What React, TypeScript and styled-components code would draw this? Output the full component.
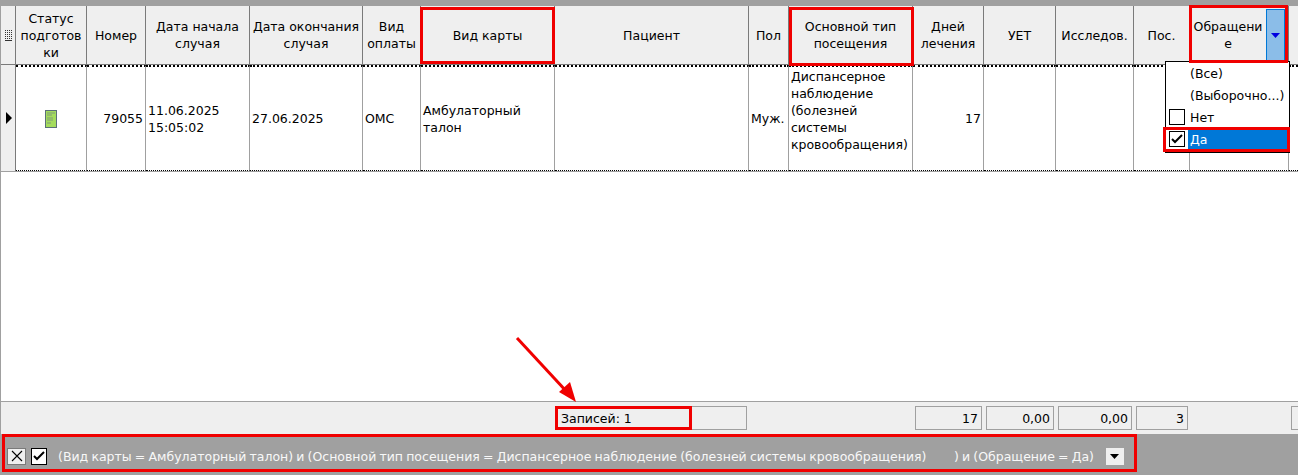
import React from 'react'
import styled, { createGlobalStyle } from 'styled-components'

const columns = '15px 71px 59px 104px 113px 58px 134px 194px 40px 124px 71px 72px 78px 56px 99px 1fr'

type Align = 'left' | 'right' | 'center'

export default function App() {
  return (
    <>
      <GlobalStyle />
      <Page>
        <TopStrip />
        <HeaderRow>
          <HeadCell>
            <GridGlyph />
          </HeadCell>
          <HeadCell>
            Статус
            <br />
            подготов
            <br />
            ки
          </HeadCell>
          <HeadCell>Номер</HeadCell>
          <HeadCell>
            Дата начала
            <br />
            случая
          </HeadCell>
          <HeadCell>
            Дата окончания
            <br />
            случая
          </HeadCell>
          <HeadCell>
            Вид
            <br />
            оплаты
          </HeadCell>
          <HeadCell>Вид карты</HeadCell>
          <HeadCell>Пациент</HeadCell>
          <HeadCell>Пол</HeadCell>
          <HeadCell>
            Основной тип
            <br />
            посещения
          </HeadCell>
          <HeadCell>
            Дней
            <br />
            лечения
          </HeadCell>
          <HeadCell>УЕТ</HeadCell>
          <HeadCell>Исследов.</HeadCell>
          <HeadCell>Пос.</HeadCell>
          <FilterHead>
            <FilterCaption>
              Обращени
              <br />е
            </FilterCaption>
            <FilterToggle>
              <svg width="9" height="5" viewBox="0 0 9 5">
                <path d="M0 0h9L4.5 5z" fill="#0000e0" />
              </svg>
            </FilterToggle>
          </FilterHead>
          <HeadCell $last />
        </HeaderRow>

        <DataRow>
          <RowMarker>
            <svg width="6" height="12" viewBox="0 0 6 12">
              <path d="M0 0l6 6-6 6z" fill="#000" />
            </svg>
          </RowMarker>
          <DataCell $align="center">
            <StatusIcon />
          </DataCell>
          <DataCell $align="right">79055</DataCell>
          <DataCell>
            <span>
              11.06.2025
              <br />
              15:05:02
            </span>
          </DataCell>
          <DataCell>27.06.2025</DataCell>
          <DataCell>ОМС</DataCell>
          <DataCell>
            <span>
              Амбулаторный
              <br />
              талон
            </span>
          </DataCell>
          <DataCell />
          <DataCell>Муж.</DataCell>
          <VisitCell>
            Диспансерное
            <br />
            наблюдение
            <br />
            (болезней
            <br />
            системы
            <br />
            кровообращения)
          </VisitCell>
          <DataCell $align="right">17</DataCell>
          <DataCell />
          <DataCell />
          <DataCell />
          <DataCell />
          <DataCell $last />
        </DataRow>

        <EmptyArea />

        <SummaryRow>
          <SummarySpacer $span={7} />
          <SummaryBox $left>Записей: 1</SummaryBox>
          <SummarySpacer $span={2} />
          <SummaryBox>17</SummaryBox>
          <SummaryBox>0,00</SummaryBox>
          <SummaryBox>0,00</SummaryBox>
          <SummaryBox>3</SummaryBox>
          <SummarySpacer $span={1} />
          <SummaryTail />
        </SummaryRow>

        <FilterBar>
          <BarButton>
            <svg width="12" height="12" viewBox="0 0 12 12">
              <path d="M1 1l10 10M11 1L1 11" stroke="#000" strokeWidth="1.1" />
            </svg>
          </BarButton>
          <BarCheck>
            <CheckMark />
          </BarCheck>
          <FilterText>
            (Вид карты = Амбулаторный талон) и (Основной тип посещения = Диспансерное наблюдение (болезней системы
            кровообращения)
          </FilterText>
          <FilterTextTail>) и (Обращение = Да)</FilterTextTail>
          <BarMenu>
            <svg width="9" height="5" viewBox="0 0 9 5">
              <path d="M0 0h9L4.5 5z" fill="#000" />
            </svg>
          </BarMenu>
        </FilterBar>

        <Dropdown>
          <DropItem>(Все)</DropItem>
          <DropItem>(Выборочно...)</DropItem>
          <DropItem>
            <ItemBox />
            Нет
          </DropItem>
          <DropItem>
            <ItemBox>
              <CheckMark />
            </ItemBox>
            <Selected>Да</Selected>
          </DropItem>
        </Dropdown>

        <RedFrame $x={420} $y={7} $w={135} $h={57} />
        <RedFrame $x={789} $y={7} $w={125} $h={59} />
        <RedFrame $x={1189} $y={5} $w={99} $h={58} />
        <RedFrame $x={1163} $y={127} $w={127} $h={25} />
        <RedFrame $x={555} $y={406} $w={137} $h={24} />
        <RedFrame $x={2} $y={434} $w={1135} $h={38} />

        <ArrowLayer width="80" height="80" viewBox="0 0 80 80">
          <path d="M2 2L52 56" stroke="#f00000" strokeWidth="3" fill="none" />
          <path d="M61 66L44 56L55 46z" fill="#f00000" />
        </ArrowLayer>
      </Page>
    </>
  )
}

function GridGlyph() {
  return (
    <svg width="7" height="11" viewBox="0 0 7 11">
      <path
        d="M0 0h1v1H0zM2 0h1v1H2zM4 0h1v1H4zM6 0h1v1H6zM0 2h1v1H0zM2 2h1v1H2zM4 2h1v1H4zM6 2h1v1H6zM0 4h1v1H0zM2 4h1v1H2zM4 4h1v1H4zM6 4h1v1H6zM0 6h1v1H0zM2 6h1v1H2zM4 6h1v1H4zM6 6h1v1H6zM0 8h1v1H0zM2 8h1v1H2zM4 8h1v1H4zM6 8h1v1H6zM0 10h7v1H0z"
        fill="#333"
      />
    </svg>
  )
}

function StatusIcon() {
  return (
    <svg width="12" height="18" viewBox="0 0 12 18">
      <rect x="0.5" y="0.5" width="11" height="17" fill="#a4dc5c" stroke="#5a6f78" />
      <path d="M2 3h8M2 5h5M2 8h6M2 10h6M2 13h4" stroke="#7f9a78" />
    </svg>
  )
}

function CheckMark() {
  return (
    <svg width="12" height="10" viewBox="0 0 12 10">
      <path d="M1 5l3 3 7-7" fill="none" stroke="#000" strokeWidth="2" />
    </svg>
  )
}

const GlobalStyle = createGlobalStyle`
  html, body {
    margin: 0;
    padding: 0;
    background: #fff;
  }
  * {
    box-sizing: border-box;
  }
`

const Page = styled.div`
  position: relative;
  width: 1298px;
  height: 475px;
  overflow: hidden;
  display: flex;
  flex-direction: column;
  border-left: 1px solid #a0a0a0;
  font-family: 'DejaVu Sans', 'Liberation Sans', sans-serif;
  font-size: 12.5px;
  line-height: 17px;
  color: #000;
`

const TopStrip = styled.div`
  height: 6px;
  margin-left: -1px;
  background: #a0a0a0;
`

const HeaderRow = styled.div`
  display: grid;
  grid-template-columns: ${columns};
  height: 59px;
  background: #efefef;
  border-bottom: 1px solid #7a7a7a;
`

const HeadCell = styled.div<{ $last?: boolean }>`
  display: flex;
  align-items: center;
  justify-content: center;
  text-align: center;
  padding: 0;
  white-space: nowrap;
  border-right: ${(p) => (p.$last ? 'none' : '1px solid #7a7a7a')};
  overflow: hidden;
`

const FilterHead = styled(HeadCell)`
  justify-content: space-between;
  padding: 3px 3px 3px 0;
`

const FilterCaption = styled.div`
  flex: 1;
  white-space: nowrap;
`

const FilterToggle = styled.div`
  width: 19px;
  height: 52px;
  display: flex;
  align-items: center;
  justify-content: center;
  background: #8bbde8;
  border: 1px solid #0078d7;
`

const DataRow = styled.div`
  display: grid;
  grid-template-columns: ${columns};
  height: 107px;
  border-bottom: 1px solid #a0a0a0;
`

const RowMarker = styled.div`
  display: flex;
  align-items: center;
  padding-left: 5px;
  background: #efefef;
  border-right: 1px solid #7a7a7a;
`

const DataCell = styled.div<{ $align?: Align; $last?: boolean }>`
  display: flex;
  align-items: center;
  justify-content: ${(p) => (p.$align === 'right' ? 'flex-end' : p.$align === 'center' ? 'center' : 'flex-start')};
  padding: 0 2px;
  white-space: nowrap;
  border-top: 2px dotted #000;
  border-bottom: 1px dotted #000;
  border-right: ${(p) => (p.$last ? 'none' : '1px solid #a0a0a0')};
  overflow: hidden;
`

const VisitCell = styled(DataCell)`
  align-items: flex-start;
  padding-top: 1px;
  letter-spacing: -0.03px;
`

const EmptyArea = styled.div`
  flex: 1;
  background: #fff;
`

const SummaryRow = styled.div`
  display: grid;
  grid-template-columns: ${columns};
  height: 33px;
  padding-top: 4px;
  padding-bottom: 4px;
  background: #efefef;
  border-top: 1px solid #a0a0a0;
`

const SummarySpacer = styled.div<{ $span: number }>`
  grid-column: span ${(p) => p.$span};
`

const SummaryBox = styled.div<{ $left?: boolean }>`
  display: flex;
  align-items: center;
  justify-content: ${(p) => (p.$left ? 'flex-start' : 'flex-end')};
  margin: 0 2px;
  padding: 0 3px;
  border: 1px solid #a0a0a0;
`

const SummaryTail = styled.div`
  margin-left: 2px;
  border: 1px solid #a0a0a0;
  border-right: none;
`

const FilterBar = styled.div`
  display: flex;
  align-items: center;
  height: 41px;
  margin-left: -1px;
  padding: 3px 0 0 7px;
  background: #a0a0a0;
  color: #f8f8f8;
`

const BarButton = styled.div`
  display: flex;
  align-items: center;
  justify-content: center;
  width: 19px;
  height: 17px;
  background: #efefef;
  border: 1px solid #7a7a7a;
`

const BarCheck = styled.div`
  display: flex;
  align-items: center;
  justify-content: center;
  width: 16px;
  height: 17px;
  margin-left: 5px;
  background: #fff;
  border: 1px solid #000;
`

const FilterText = styled.span`
  margin-left: 11px;
  width: 896px;
  white-space: nowrap;
  word-spacing: -0.8px;
`

const FilterTextTail = styled.span`
  white-space: nowrap;
  word-spacing: -0.8px;
`

const BarMenu = styled.div`
  display: flex;
  align-items: center;
  justify-content: center;
  width: 18px;
  height: 17px;
  margin-left: 12px;
  background: #efefef;
`

const Dropdown = styled.div`
  position: absolute;
  left: 1164px;
  top: 61px;
  width: 125px;
  height: 92px;
  background: #fff;
  border: 1px solid #000;
`

const DropItem = styled.div`
  display: flex;
  align-items: center;
  height: 22px;
  padding-left: 24px;
  position: relative;
  white-space: nowrap;
`

const ItemBox = styled.span`
  position: absolute;
  left: 3px;
  top: 3px;
  width: 16px;
  height: 16px;
  display: flex;
  align-items: center;
  justify-content: center;
  background: #fff;
  border: 1px solid #000;
`

const Selected = styled.span`
  position: absolute;
  left: 22px;
  right: 0;
  top: 0;
  bottom: 0;
  padding-left: 2px;
  display: flex;
  align-items: center;
  background: #0078d7;
  color: #fff;
`

const RedFrame = styled.div<{ $x: number; $y: number; $w: number; $h: number }>`
  position: absolute;
  left: ${(p) => p.$x - 1}px;
  top: ${(p) => p.$y}px;
  width: ${(p) => p.$w}px;
  height: ${(p) => p.$h}px;
  border: 3px solid #f00000;
  pointer-events: none;
`

const ArrowLayer = styled.svg`
  position: absolute;
  left: 514px;
  top: 336px;
`
